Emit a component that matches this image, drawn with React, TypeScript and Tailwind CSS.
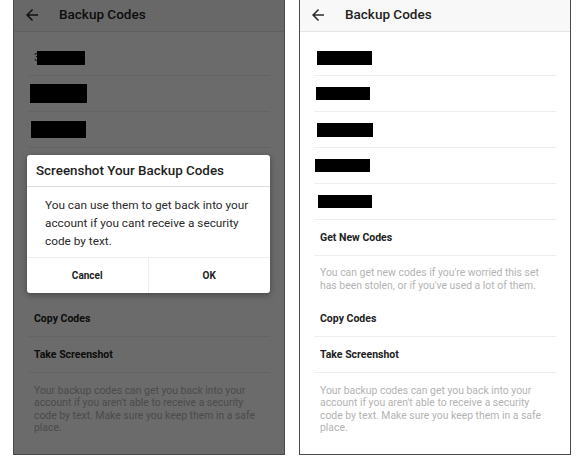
import { ReactNode } from 'react';
import clsx from 'clsx';

interface Bar {
  w: number;
  h: number;
  dx: number;
  digit?: boolean;
}

interface ScreenProps {
  codes: Bar[];
  dimmed?: boolean;
  children?: ReactNode;
}

const rightCodes: Bar[] = [
  { w: 55, h: 14, dx: 3 },
  { w: 54, h: 13, dx: 2 },
  { w: 56, h: 14, dx: 3 },
  { w: 55, h: 13, dx: 1 },
  { w: 54, h: 13, dx: 4 },
];

const leftCodes: Bar[] = [
  { w: 48, h: 14, dx: 11, digit: true },
  { w: 57, h: 19, dx: 2 },
  { w: 55, h: 17, dx: 3 },
  { w: 55, h: 13, dx: 1 },
  { w: 54, h: 13, dx: 4 },
];

function BackArrow() {
  return (
    <svg width="18" height="18" viewBox="0 0 24 24" className="fill-[#2a2a2a]">
      <path d="M20 11H7.83l5.59-5.59L12 4l-8 8 8 8 1.41-1.41L7.83 13H20v-2z" />
    </svg>
  );
}

function Screen({ codes, dimmed, children }: ScreenProps) {
  return (
    <div className="relative h-[455px] w-[272px] overflow-hidden border-x border-b border-[#4a4a4a] bg-white">
      <div className="flex h-[32px] items-center border-b border-[#e4e4e4] bg-[#f8f8f8] pb-[2px] pl-[9px]">
        <BackArrow />
        <span className="ml-[18px] text-[13.5px] font-medium text-[#222]">Backup Codes</span>
      </div>

      <div className="px-[14px] pt-[8px]">
        {codes.map((c, i) => (
          <div key={i} className="flex h-[36px] items-center border-b border-[#eeeeee]">
            {c.digit && <span className="-mr-[3px] ml-[6px] text-[10px] text-[#333]">3</span>}
            <div
              className={clsx('bg-black', dimmed && i > 2 && 'invisible')}
              style={{ width: c.w, height: c.h, marginLeft: c.digit ? 0 : c.dx }}
            />
          </div>
        ))}

        <div className="flex h-[36px] items-center border-b border-[#eeeeee] pl-[6px] text-[10.5px] font-bold text-[#222]">
          {!dimmed && 'Get New Codes'}
        </div>
        <p className="h-[46px] pb-[10px] pl-[6px] pr-[6px] pt-[10px] text-[10.4px] leading-[13px] text-[#b3b3b3]">
          {!dimmed && "You can get new codes if you're worried this set has been stolen, or if you've used a lot of them."}
        </p>
        <div className="flex h-[35px] items-center border-b border-[#eeeeee] pl-[6px] text-[10.5px] font-bold text-[#222]">
          Copy Codes
        </div>
        <div className="flex h-[36px] items-center border-b border-[#eeeeee] pl-[6px] text-[10.5px] font-bold text-[#222]">
          Take Screenshot
        </div>
        <p className="pl-[6px] pr-[6px] pt-[12px] text-[10.4px] leading-[12.4px] text-[#b3b3b3]">
          Your backup codes can get you back into your account if you aren't able to receive a security code by text. Make sure you keep them in a safe place.
        </p>
      </div>

      {dimmed && <div className="absolute inset-0 bg-black/[0.58]" />}
      {children}
    </div>
  );
}

function ScreenshotDialog() {
  return (
    <div className="absolute left-[13px] top-[155px] w-[243px] rounded-[3px] bg-white shadow-[0_2px_6px_rgba(0,0,0,0.35)]">
      <div className="flex h-[32px] items-center border-b border-[#dcdcdc] pl-[9px] pt-[2px] text-[13.4px] font-medium text-[#1e1e1e]">
        Screenshot Your Backup Codes
      </div>
      <p className="pb-[7px] pl-[18px] pr-[8px] pt-[9px] text-[11.8px] leading-[18px] text-[#2a2a2a]">
        You can use them to get back into your account if you cant receive a security code by text.
      </p>
      <div className="grid h-[36px] grid-cols-2 border-t border-[#eeeeee] text-[10px] font-bold text-[#222]">
        <button className="flex items-center justify-center border-r border-[#eeeeee]">Cancel</button>
        <button className="flex items-center justify-center">OK</button>
      </div>
    </div>
  );
}

export default function App() {
  return (
    <div className="flex h-[463px] w-[576px] gap-[14px] bg-white pl-[13px] font-['Roboto',sans-serif]">
      <Screen codes={leftCodes} dimmed>
        <ScreenshotDialog />
      </Screen>
      <Screen codes={rightCodes} />
    </div>
  );
}
